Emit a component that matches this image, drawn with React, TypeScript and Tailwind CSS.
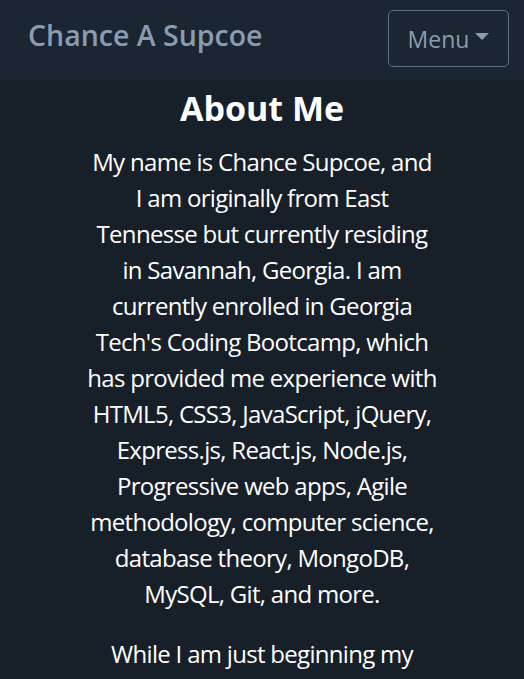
import React from "react";

const para1 = [
  "My name is Chance Supcoe, and",
  "I am originally from East",
  "Tennesse but currently residing",
  "in Savannah, Georgia. I am",
  "currently enrolled in Georgia",
  "Tech's Coding Bootcamp, which",
  "has provided me experience with",
  "HTML5, CSS3, JavaScript, jQuery,",
  "Express.js, React.js, Node.js,",
  "Progressive web apps, Agile",
  "methodology, computer science,",
  "database theory, MongoDB,",
  "MySQL, Git, and more.",
];

const para2 = ["While I am just beginning my"];

export default function App() {
  return (
    <div className="min-h-screen bg-[#171f29]" style={{ fontFamily: '"Open Sans", "Noto Sans", sans-serif' }}>
      <nav className="h-[80px] bg-[#1c2633] flex items-center justify-between pl-[28px] pr-[15px]">
        <span className="text-[28.5px] font-semibold text-[#8b9cb1] mb-[10px]">Chance A Supcoe</span>
        <button className="w-[121px] h-[57px] mb-[4px] rounded-[5px] border border-[#5f6e80] flex items-center justify-center gap-[6px] text-[#8b9cb1] text-[23px]">
          <span className="mt-[3px]">Menu</span>
          <svg width="14" height="8" viewBox="0 0 14 8" className="mt-[-3px]">
            <path d="M0 0 L14 0 L7 7 Z" fill="#8b9cb1" />
          </svg>
        </button>
      </nav>
      <main className="w-[400px] mx-auto text-center text-white pt-[6px]">
        <h1 className="text-[34px] leading-[44px] font-bold mb-[14px]">About Me</h1>
        <p className="text-[24px] leading-[36px] mb-[24px] tracking-[-0.7px]">
          {para1.map((l, i) => (
            <span key={i} className="block">{l}</span>
          ))}
        </p>
        <p className="text-[24px] leading-[36px] tracking-[-0.7px]">
          {para2.map((l, i) => (
            <span key={i} className="block">{l}</span>
          ))}
        </p>
      </main>
    </div>
  );
}
